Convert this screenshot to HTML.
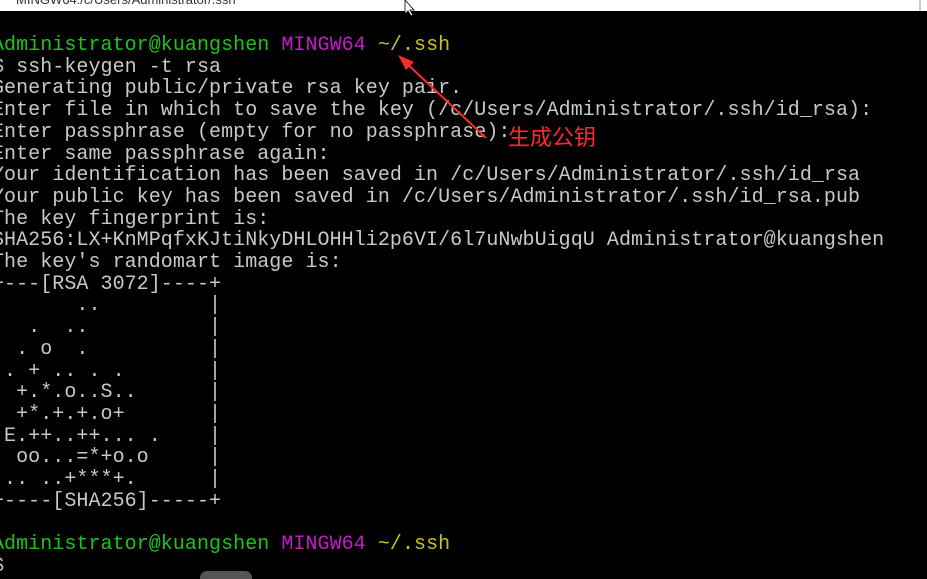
<!DOCTYPE html>
<html><head><meta charset="utf-8"><style>
html,body{margin:0;padding:0;}
body{width:927px;height:579px;background:#000;position:relative;overflow:hidden;}
#title{position:absolute;left:0;top:0;width:927px;height:11px;background:#fff;overflow:hidden;}
#title span{position:absolute;left:16px;top:-8px;font:13px "Liberation Sans",sans-serif;color:#333;}
#term{position:absolute;left:-8px;top:35px;margin:0;font-family:"Liberation Mono",monospace;font-size:20px;letter-spacing:0.055px;line-height:21.7px;color:#c8c8c8;white-space:pre;}
.g{color:#1cc41c}.m{color:#c41cc4}.y{color:#c4c41c}
#note{position:absolute;left:508px;top:120px;font:22px "Liberation Sans","Noto Sans CJK SC",sans-serif;color:#ff2a2a;}
</style></head><body>
<div id="title"><span>MINGW64:/c/Users/Administrator/.ssh</span></div>
<pre id="term"><span class="g">Administrator@kuangshen</span> <span class="m">MINGW64</span> <span class="y">~/.ssh</span>
$ ssh-keygen -t rsa
Generating public/private rsa key pair.
Enter file in which to save the key (/c/Users/Administrator/.ssh/id_rsa):
Enter passphrase (empty for no passphrase):
Enter same passphrase again:
Your identification has been saved in /c/Users/Administrator/.ssh/id_rsa
Your public key has been saved in /c/Users/Administrator/.ssh/id_rsa.pub
The key fingerprint is:
SHA256:LX+KnMPqfxKJtiNkyDHLOHHli2p6VI/6l7uNwbUigqU Administrator@kuangshen
The key's randomart image is:
+---[RSA 3072]----+
|      ..         |
|  .  ..          |
| . o  .          |
|. + .. . .       |
| +.*.o..S..      |
| +*.+.+.o+       |
|E.++..++... .    |
| oo...=*+o.o     |
|.. ..+***+.      |
+----[SHA256]-----+

<span class="g">Administrator@kuangshen</span> <span class="m">MINGW64</span> <span class="y">~/.ssh</span>
$</pre>
<svg style="position:absolute;left:0;top:0" width="927" height="579">
<line x1="486" y1="138" x2="402" y2="59" stroke="#ff2a2a" stroke-width="2"/>
<polygon points="398,55 414,62 406,70" fill="#ff2a2a"/>
<polygon points="405,0 405,14 408,11 411,16 413,15 410,10 414,10" fill="#fff" stroke="#000" stroke-width="0.8"/>
<rect x="200" y="571" width="52" height="14" rx="7" fill="#555"/>
<line x1="920" y1="0" x2="920" y2="11" stroke="#999"/>
</svg>
<div id="note">生成公钥</div>
</body></html>
